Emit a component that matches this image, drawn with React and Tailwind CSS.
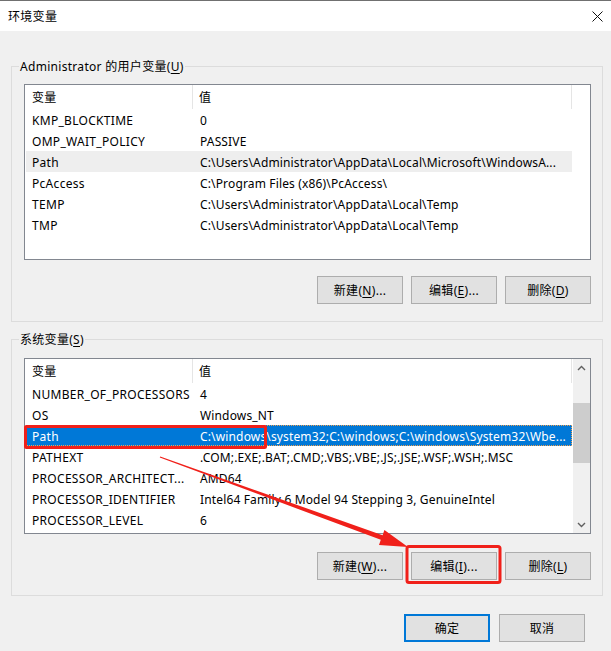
import React from "react";

const userVars = [
    ["KMP_BLOCKTIME", "0"],
    ["OMP_WAIT_POLICY", "PASSIVE"],
    ["Path", "C:\\Users\\Administrator\\AppData\\Local\\Microsoft\\WindowsA..."],
    ["PcAccess", "C:\\Program Files (x86)\\PcAccess\\"],
    ["TEMP", "C:\\Users\\Administrator\\AppData\\Local\\Temp"],
    ["TMP", "C:\\Users\\Administrator\\AppData\\Local\\Temp"],
];

const systemVars = [
    ["NUMBER_OF_PROCESSORS", "4"],
    ["OS", "Windows_NT"],
    ["Path", "C:\\windows\\system32;C:\\windows;C:\\windows\\System32\\Wbe..."],
    ["PATHEXT", ".COM;.EXE;.BAT;.CMD;.VBS;.VBE;.JS;.JSE;.WSF;.WSH;.MSC"],
    ["PROCESSOR_ARCHITECT...", "AMD64"],
    ["PROCESSOR_IDENTIFIER", "Intel64 Family 6 Model 94 Stepping 3, GenuineIntel"],
    ["PROCESSOR_LEVEL", "6"],
];

function WinButton({ children, isDefault }) {
    return (
        <div
            className={
                isDefault
                    ? "flex items-center justify-center pt-[2px] w-[86px] h-[28px] bg-[#e1e1e1] border-2 border-[#0078d7]"
                    : "flex items-center justify-center pt-[2px] w-[86px] h-[28px] bg-[#e1e1e1] border border-[#adadad]"
            }
        >
            {children}
        </div>
    );
}

function Key({ label, k, suffix = "" }) {
    return (
        <span>
            {label}(<span className="underline underline-offset-2">{k}</span>){suffix}
        </span>
    );
}

function VarRow({ name, value, state }) {
    const base = "flex items-center pt-[2px] h-[21px] w-[546px] ml-[1px] whitespace-nowrap";
    let cls = base;
    if (state === "hover") cls = base + " bg-[#eeeeee]";
    if (state === "selected")
        cls =
            base +
            " bg-[#0078d7] text-white outline outline-1 outline-dotted outline-[#f0a050] -outline-offset-1";

    return (
        <div className={cls}>
            <div className="w-[167px] shrink-0 pl-[6px] overflow-hidden">{name}</div>
            <div className="flex-1 pl-[7px] tracking-[0.15px]">{value}</div>
        </div>
    );
}

function ListHeader() {
    return (
        <div className="flex h-[24px] items-center">
            <div className="w-[168px] h-full flex items-center pt-[2px] pl-[7px] border-r border-[#e5e5e5]">
                变量
            </div>
            <div className="w-[379px] h-full flex items-center pt-[2px] pl-[6px] border-r border-[#e5e5e5]">
                值
            </div>
        </div>
    );
}

function Chevron({ up }) {
    return (
        <svg width="9" height="6" viewBox="0 0 9 6">
            <path
                d={up ? "M1 5 L4.5 1.5 L8 5" : "M1 1 L4.5 4.5 L8 1"}
                fill="none"
                stroke="#606060"
                strokeWidth="1.4"
            />
        </svg>
    );
}

function VarList({ rows, hoverIndex, selectedIndex, scrollbar }) {
    return (
        <div className="flex h-[176px] bg-white border border-[#828790]">
            <div className="flex flex-col w-[548px]">
                <ListHeader />
                {rows.map(([name, value], i) => (
                    <VarRow
                        key={name}
                        name={name}
                        value={value}
                        state={
                            i === selectedIndex
                                ? "selected"
                                : i === hoverIndex
                                ? "hover"
                                : null
                        }
                    />
                ))}
            </div>
            {scrollbar && (
                <div className="flex flex-col w-[17px] bg-[#f0f0f0]">
                    <div className="flex items-center justify-center h-[17px]">
                        <Chevron up />
                    </div>
                    <div className="h-[27px]" />
                    <div className="h-[60px] bg-[#cdcdcd]" />
                    <div className="flex-1" />
                    <div className="flex items-center justify-center h-[17px]">
                        <Chevron />
                    </div>
                </div>
            )}
        </div>
    );
}

function GroupBox({ title, children, className }) {
    return (
        <div className={"relative border border-[#dcdcdc] " + className}>
            <div className="absolute -top-[9px] left-[7px] px-[1px] pt-[1px] bg-[#f0f0f0] leading-[16px]">
                {title}
            </div>
            {children}
        </div>
    );
}

export default function App() {
    return (
        <div
            className="relative w-[611px] h-[651px] flex flex-col bg-[#f0f0f0] text-[12px] tracking-[0.3px] text-black border-t border-[#707070] overflow-hidden"
            style={{ fontFamily: '"Noto Sans", "Noto Sans CJK SC", sans-serif' }}
        >
            <div className="flex items-center justify-between h-[30px] bg-white pl-[8px] pr-[8px]">
                <span className="pt-[1px]">环境变量</span>
                <svg width="11" height="11" viewBox="0 0 11 11">
                    <path d="M0.5 0.5 L10.5 10.5 M10.5 0.5 L0.5 10.5" stroke="#111" strokeWidth="1" />
                </svg>
            </div>

            <div className="flex flex-col pl-[11px] pr-[8px]">
                <GroupBox
                    className="mt-[35px] pt-[17px] pb-[17px] pl-[12px] pr-[11px]"
                    title={<Key label="Administrator 的用户变量" k="U" />}
                >
                    <VarList rows={userVars} hoverIndex={2} />
                    <div className="flex justify-end gap-[8px] mt-[16px]">
                        <WinButton>
                            <Key label="新建" k="N" suffix="..." />
                        </WinButton>
                        <WinButton>
                            <Key label="编辑" k="E" suffix="..." />
                        </WinButton>
                        <WinButton>
                            <Key label="删除" k="D" />
                        </WinButton>
                    </div>
                </GroupBox>

                <GroupBox
                    className="mt-[17px] pt-[18px] pb-[15px] pl-[12px] pr-[11px]"
                    title={<Key label="系统变量" k="S" />}
                >
                    <VarList rows={systemVars} selectedIndex={2} scrollbar />
                    <div className="flex justify-end gap-[8px] mt-[18px]">
                        <WinButton>
                            <Key label="新建" k="W" suffix="..." />
                        </WinButton>
                        <WinButton>
                            <Key label="编辑" k="I" suffix="..." />
                        </WinButton>
                        <WinButton>
                            <Key label="删除" k="L" />
                        </WinButton>
                    </div>
                </GroupBox>

                <div className="flex justify-end gap-[9px] mt-[18px] pr-[18px]">
                    <WinButton isDefault>确定</WinButton>
                    <WinButton>取消</WinButton>
                </div>
            </div>

            {/* annotation overlay: red box + arrow */}
            <svg
                className="absolute inset-0 pointer-events-none"
                width="611"
                height="651"
                viewBox="0 0 611 651"
            >
                <rect x="25.5" y="425.5" width="240" height="21" fill="none" stroke="#f0201a" strokeWidth="3" rx="1" />
                <rect x="407" y="545.5" width="93" height="36" fill="none" stroke="#f0201a" strokeWidth="3" rx="2" />
                <polygon
                    points="160.2,455.5 382.6,534.2 384.4,529 408,546 379,544 380.8,538.8 159.8,456.5"
                    fill="#f0201a"
                />
            </svg>
        </div>
    );
}
